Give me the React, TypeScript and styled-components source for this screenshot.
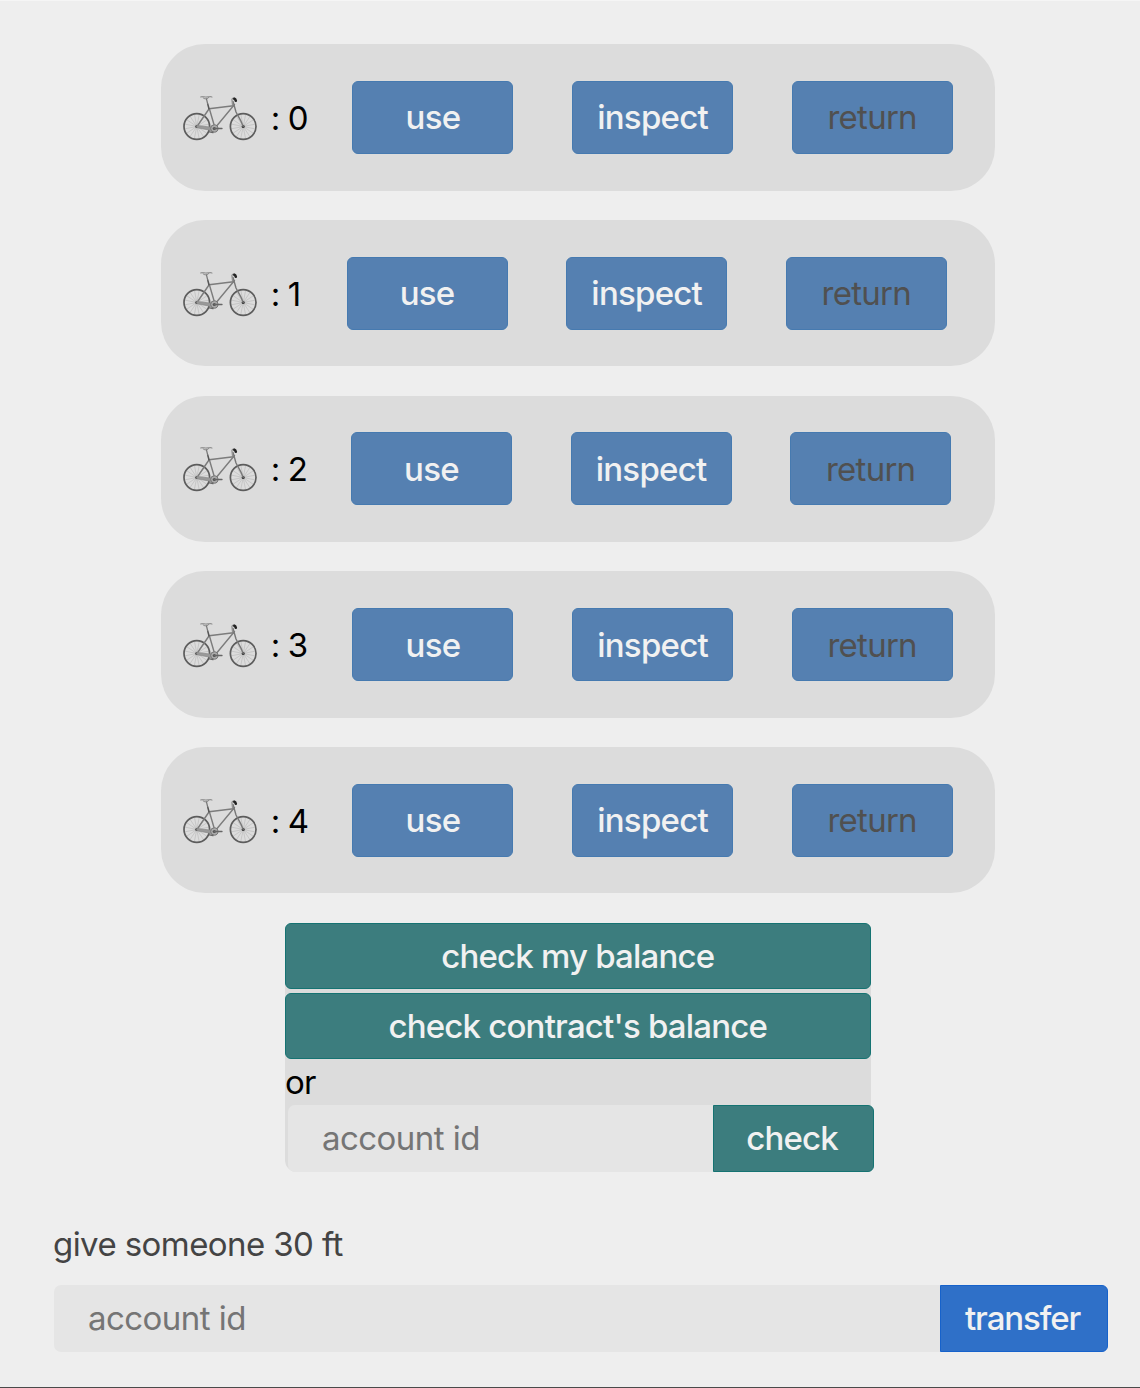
import React from "react";
import styled, { createGlobalStyle } from "styled-components";

const GlobalStyle = createGlobalStyle`
  * { box-sizing: border-box; }
  body {
    margin: 0;
    background: #eeeeee;
    font-family: Inter, "Liberation Sans", sans-serif;
    font-size: 33px;
    color: #000;
  }
`;

const Page = styled.div`
  display: flex;
  flex-direction: column;
  width: 1140px;
  height: 1388px;
  padding-top: 43.4px;
  border-top: 1px solid #f5f5f5;
  border-bottom: 1px solid #4a4a4a;
  overflow: hidden;
`;

const BikeList = styled.div`
  display: flex;
  flex-direction: column;
  gap: 29.5px;
  margin-left: 161px;
  width: 834px;
`;

const BikeRow = styled.div`
  display: flex;
  align-items: center;
  height: 146.2px;
  padding-left: 22px;
  border-radius: 44px;
  background: #dcdcdc;
`;

const BikeDrawing = styled.svg`
  flex: none;
  width: 75px;
  height: 48px;
  margin-top: 5px;
`;

const BikeLabel = styled.span<{ $width: number }>`
  flex: none;
  width: ${(p) => p.$width}px;
  margin: 1px 44px 0 12.8px;
  white-space: nowrap;
  letter-spacing: -0.6px;
  word-spacing: -0.7px;
`;

const Actions = styled.div`
  display: flex;
  gap: 58.6px;
`;

const Button = styled.button`
  display: flex;
  align-items: center;
  justify-content: center;
  padding: 0;
  border: 1px solid #157372;
  border-radius: 6px;
  background: #3c7d7e;
  color: #f1f1f1;
  font: inherit;
  font-weight: 500;
  letter-spacing: -0.8px;
  white-space: nowrap;
`;

const BikeButton = styled(Button)`
  width: 161px;
  height: 73px;
  border-color: #467ab0;
  background: #5580b1;
  letter-spacing: -0.75px;
  &:disabled { color: #505050; font-weight: 400; }
`;

const BalancePanel = styled.section`
  display: flex;
  flex-direction: column;
  width: 585.6px;
  height: 248.6px;
  margin: 29.8px 0 0 285px;
  border-radius: 6px 6px 6px 12px;
  background: #dcdcdc;
`;

const WideButton = styled(Button)`
  width: 100%;
  height: 66px;
  margin-bottom: 4.2px;
`;

const Or = styled.span`
  height: 41.6px;
  line-height: 38px;
  letter-spacing: -0.9px;
`;

const InputGroup = styled.div<{ $width: number }>`
  display: flex;
  flex: none;
  width: ${(p) => p.$width}px;
  height: 67px;
`;

const AccountInput = styled.input`
  flex: 1;
  min-width: 0;
  padding: 0 34px 1px;
  border: 0;
  border-radius: 7px 0 0 7px;
  background: #e5e5e5;
  font: inherit;
  letter-spacing: -0.55px;
  outline: none;
  &::placeholder { color: #757575; opacity: 1; }
`;

const CheckGroup = styled(InputGroup)`
  margin-left: 3px;
`;

const CheckButton = styled(Button)`
  width: 161px;
  padding: 0 2px 1px 0;
  border-radius: 0 6px 6px 0;
`;

const TransferButton = styled(Button)`
  width: 168px;
  padding: 0 2px 1px 0;
  border-radius: 0 6px 6px 0;
  border-color: #1662cb;
  background: #2f70c8;
  letter-spacing: -1.1px;
`;

const Transfer = styled.section`
  display: flex;
  flex-direction: column;
  margin: 48.8px 0 0 54px;
`;

const TransferLabel = styled.label`
  height: 64px;
  margin-left: -1px;
  line-height: 47px;
  color: #444;
  letter-spacing: -0.58px;
`;

const spokes = Array.from({ length: 8 }, (_, i) => (i * Math.PI) / 8 + 0.2);

const Wheel = ({ cx }: { cx: number }) => (
  <g>
    {spokes.map((a) => (
      <line
        key={a}
        x1={cx - 12 * Math.cos(a)}
        y1={30.5 - 12 * Math.sin(a)}
        x2={cx + 12 * Math.cos(a)}
        y2={30.5 + 12 * Math.sin(a)}
        stroke="#aaa"
        strokeWidth=".45"
      />
    ))}
    <circle cx={cx} cy="30.5" r="12.8" stroke="#5c5c5c" strokeWidth="1.7" />
    <circle cx={cx} cy="30.5" r="1.5" fill="#333" stroke="none" />
  </g>
);

const Bike = () => (
  <BikeDrawing viewBox="0 0 75 48" fill="none" strokeLinecap="round" strokeLinejoin="round" aria-label="bike">
    <Wheel cx={13.8} />
    <Wheel cx={60.2} />
    <path d="M14 30.5L26.3 12.5L32 32L51.5 8.5" stroke="#7c7c7c" strokeWidth="1.4" />
    <path d="M26 12.8L50.5 9.7" stroke="#7c7c7c" strokeWidth="1.6" />
    <path d="M24.7 8L26 12.8" stroke="#555" strokeWidth="1.5" />
    <path d="M24.7 8L23.5 3" stroke="#777" strokeWidth="1.2" />
    <path d="M17.7 .9C20 .2 22 1.3 24 1C26 .5 27.5 .5 29 1M20 1.7C21.5 3.5 24.5 3.2 26 1.3" stroke="#777" strokeWidth=".9" />
    <path d="M60.2 30.5C57.5 23 55 20 53 16L50 5.4" stroke="#777" strokeWidth="1.4" />
    <path d="M49.4 8.5L48.9 3.3Q49.3 1.8 51.5 2.3" stroke="#888" strokeWidth="1.1" />
    <path d="M51.3 2.8Q52.5 3.3 52.8 4.7" stroke="#222" strokeWidth="2.6" />
    <path d="M14 29.5L31 31.5L31 35L14 31.7Z" fill="#999" stroke="#888" strokeWidth=".7" />
    <circle cx="31.3" cy="32.5" r="3.7" fill="#aaa" stroke="#777" strokeWidth="1" />
    <circle cx="31.3" cy="32.5" r="1.6" fill="#555" stroke="none" />
    <path d="M31.5 32.5H39M26.5 35.8L30 36.5" stroke="#666" strokeWidth="1.3" />
  </BikeDrawing>
);

const bikes = [
  { id: 0, width: 37.7 },
  { id: 1, width: 31.8 },
  { id: 2, width: 36.2 },
  { id: 3, width: 37.7 },
  { id: 4, width: 37.7 },
];

export default function App() {
  return (
    <>
      <GlobalStyle />
      <Page>
        <BikeList>
          {bikes.map((bike) => (
            <BikeRow key={bike.id}>
              <Bike />
              <BikeLabel $width={bike.width}>: {bike.id}</BikeLabel>
              <Actions>
                <BikeButton>use</BikeButton>
                <BikeButton>inspect</BikeButton>
                <BikeButton disabled>return</BikeButton>
              </Actions>
            </BikeRow>
          ))}
        </BikeList>
        <BalancePanel>
          <WideButton>check my balance</WideButton>
          <WideButton>check contract's balance</WideButton>
          <Or>or</Or>
          <CheckGroup $width={585.6}>
            <AccountInput placeholder="account id" />
            <CheckButton>check</CheckButton>
          </CheckGroup>
        </BalancePanel>
        <Transfer>
          <TransferLabel>give someone 30 ft</TransferLabel>
          <InputGroup $width={1053.6}>
            <AccountInput placeholder="account id" />
            <TransferButton>transfer</TransferButton>
          </InputGroup>
        </Transfer>
      </Page>
    </>
  );
}
